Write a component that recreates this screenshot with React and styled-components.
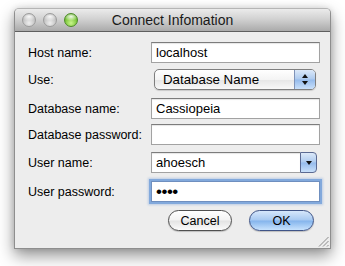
import React from "react";
import styled, { createGlobalStyle } from "styled-components";

const GlobalStyle = createGlobalStyle`
  html, body {
    margin: 0;
    background: #fff;
  }
  body {
    font-family: "Liberation Sans", Arial, sans-serif;
    color: #000;
  }
`;

const Page = styled.div`
  width: 345px;
  height: 266px;
  padding: 8px 0 0 14px;
  box-sizing: border-box;
  overflow: hidden;
`;

const Window = styled.div`
  position: relative;
  width: 317px;
  height: 241px;
  box-sizing: border-box;
  display: flex;
  flex-direction: column;
  border: 1px solid #8e8e8e;
  border-top-color: #b5b5b5;
  border-radius: 5px 5px 0 0;
  background: #ededed;
  box-shadow: 0 7px 16px rgba(0, 0, 0, 0.42), 0 0 6px rgba(0, 0, 0, 0.12);
`;

const TitleBar = styled.div`
  position: relative;
  height: 22px;
  display: flex;
  align-items: center;
  padding-left: 7px;
  border-bottom: 1px solid #5f5f5f;
  border-radius: 4px 4px 0 0;
  background: linear-gradient(#ebebeb, #d2d2d2 45%, #aaaaaa);
`;

const Lights = styled.div`
  display: flex;
  gap: 7px;
`;

const Light = styled.span`
  width: 14px;
  height: 14px;
  border-radius: 50%;
  box-sizing: border-box;
  border: 1px solid ${(p) => (p.$active ? "#4d8a28" : "#9c9c9c")};
  background: ${(p) =>
    p.$active
      ? "radial-gradient(ellipse 60% 35% at 50% 22%, rgba(255,255,255,0.9), rgba(255,255,255,0) 100%), radial-gradient(circle at 50% 75%, #c9f58c, #7cc63a 55%, #4f9c1f)"
      : "radial-gradient(ellipse 60% 35% at 50% 22%, rgba(255,255,255,0.9), rgba(255,255,255,0) 100%), radial-gradient(circle at 50% 75%, #eeeeee, #c4c4c4 55%, #a7a7a7)"};
`;

const Title = styled.div`
  position: absolute;
  left: 0;
  right: 0;
  top: 0;
  bottom: 0;
  display: flex;
  align-items: center;
  justify-content: center;
  font-size: 14px;
  color: #1a1a1a;
  pointer-events: none;
`;

const Body = styled.div`
  flex: 1;
  display: flex;
  flex-direction: column;
  padding: 10px 10px 0 13px;
`;

const Row = styled.div`
  display: flex;
  align-items: center;
  height: 21px;
  margin-top: ${(p) => p.$gap}px;
`;

const Label = styled.div`
  width: 123px;
  font-size: 12.5px;
  white-space: nowrap;
`;

const TextField = styled.div`
  width: 169px;
  height: 21px;
  box-sizing: border-box;
  padding: 0 4px;
  border: 1px solid #a2a2a2;
  border-top-color: #7c7c7c;
  background: #fff;
  box-shadow: inset 0 1px 1px rgba(0, 0, 0, 0.1);
  font-size: 13px;
  line-height: 19px;
  white-space: nowrap;
  overflow: hidden;
  ${(p) =>
    p.$focused &&
    `box-shadow: 0 0 0 2px #82a9dc, 0 0 2px 3px rgba(130, 169, 220, 0.45);
     border-color: #6f8fbf;`}
`;

const Dots = styled.span`
  display: inline-block;
  vertical-align: top;
  height: 19px;
  font-size: 17px;
  line-height: 19px;
  letter-spacing: -0.5px;
`;

const Popup = styled.div`
  width: 162px;
  height: 21px;
  margin-left: 3px;
  box-sizing: border-box;
  display: flex;
  border: 1px solid #7e7e7e;
  border-radius: 5px;
  overflow: hidden;
  background: linear-gradient(#ffffff, #f4f4f4 50%, #e6e6e6 52%, #f8f8f8);
  box-shadow: 0 1px 1px rgba(0, 0, 0, 0.15);
`;

const PopupText = styled.div`
  flex: 1;
  padding-left: 8px;
  font-size: 13.3px;
  line-height: 19px;
`;

const AquaButton = styled.div`
  width: ${(p) => p.$w}px;
  display: flex;
  flex-direction: column;
  align-items: center;
  justify-content: center;
  gap: 3px;
  border-left: 1px solid #7f93b8;
  background: linear-gradient(#dce9f9, #aecbef 48%, #95bbec 52%, #c9e0fa);
`;

const Arrow = styled.span`
  width: 0;
  height: 0;
  border-left: 3px solid transparent;
  border-right: 3px solid transparent;
  ${(p) => (p.$up ? "border-bottom: 4px solid #111;" : "border-top: 4px solid #111;")}
`;

const Combo = styled.div`
  width: 166px;
  height: 21px;
  display: flex;
`;

const ComboField = styled(TextField)`
  flex: 1;
  width: auto;
  border-right: none;
`;

const ComboButton = styled(AquaButton)`
  border: 1px solid #5b6a92;
  border-radius: 0 4px 4px 0;
  box-sizing: border-box;
`;

const Buttons = styled.div`
  display: flex;
  justify-content: flex-end;
  gap: 17px;
  margin-top: 8px;
  padding-right: 6px;
`;

const PushButton = styled.div`
  width: ${(p) => p.$w}px;
  height: 21px;
  box-sizing: border-box;
  border-radius: 11px;
  display: flex;
  align-items: center;
  justify-content: center;
  font-size: 12.5px;
  border: 1px solid ${(p) => (p.$default ? "#3f5487" : "#505050")};
  background: ${(p) =>
    p.$default
      ? "linear-gradient(#d6e7fb, #a7c9f1 48%, #84b4ec 52%, #c7e2fd)"
      : "linear-gradient(#ffffff, #f3f3f3 48%, #e3e3e3 52%, #fbfbfb)"};
  box-shadow: 0 1px 1px rgba(0, 0, 0, 0.2);
`;

const Grip = styled.svg`
  position: absolute;
  right: 1px;
  bottom: 1px;
`;

export default function App() {
  return (
    <>
      <GlobalStyle />
      <Page>
        <Window>
          <TitleBar>
            <Lights>
              <Light />
              <Light />
              <Light $active />
            </Lights>
            <Title>Connect Infomation</Title>
          </TitleBar>
          <Body>
            <Row $gap={0}>
              <Label>Host name:</Label>
              <TextField>localhost</TextField>
            </Row>
            <Row $gap={6}>
              <Label>Use:</Label>
              <Popup>
                <PopupText>Database Name</PopupText>
                <AquaButton $w={20}>
                  <Arrow $up />
                  <Arrow />
                </AquaButton>
              </Popup>
            </Row>
            <Row $gap={8}>
              <Label>Database name:</Label>
              <TextField>Cassiopeia</TextField>
            </Row>
            <Row $gap={5}>
              <Label>Database password:</Label>
              <TextField />
            </Row>
            <Row $gap={7}>
              <Label>User name:</Label>
              <Combo>
                <ComboField>ahoesch</ComboField>
                <ComboButton $w={17}>
                  <Arrow />
                </ComboButton>
              </Combo>
            </Row>
            <Row $gap={8}>
              <Label>User password:</Label>
              <TextField $focused>
                <Dots>••••</Dots>
              </TextField>
            </Row>
            <Buttons>
              <PushButton $w={64}>Cancel</PushButton>
              <PushButton $w={65} $default>
                OK
              </PushButton>
            </Buttons>
          </Body>
          <Grip width="11" height="11" viewBox="0 0 11 11">
            <g stroke="#8a8a8a" strokeWidth="1">
              <line x1="10.5" y1="1" x2="1" y2="10.5" />
              <line x1="10.5" y1="5" x2="5" y2="10.5" />
              <line x1="10.5" y1="9" x2="9" y2="10.5" />
            </g>
          </Grip>
        </Window>
      </Page>
    </>
  );
}
